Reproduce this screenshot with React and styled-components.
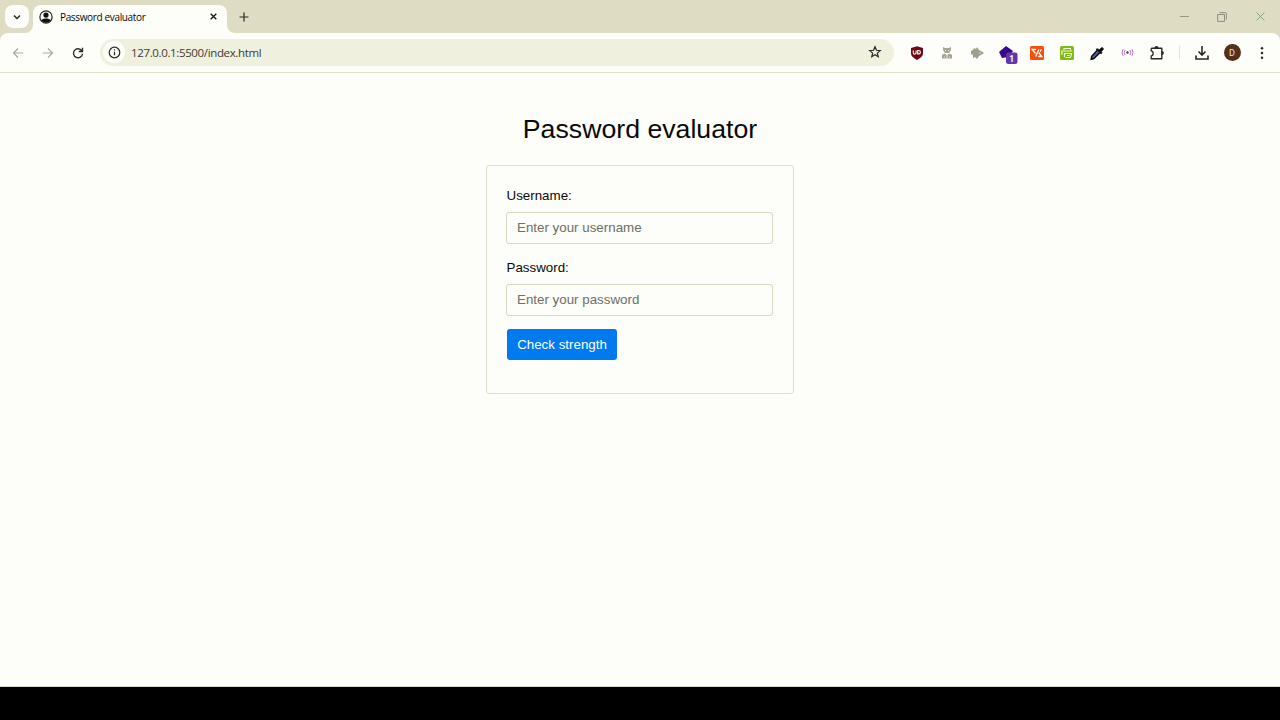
import React from "react";
import styled, { createGlobalStyle } from "styled-components";

const Global = createGlobalStyle`
  * { box-sizing: border-box; }
  body { margin: 0; background: #fdfdf9; overflow: hidden; }
`;
const Screen = styled.div`
  width: 1280px; height: 720px; display: flex; flex-direction: column;
  background: #fdfdf9; color: #090909; font-family: "Liberation Sans", Arial, sans-serif;
`;
const TabStrip = styled.header`
  height: 33px; flex: none; display: flex; align-items: flex-start;
  background: #dedcc3; padding: 5px 0 0 5px;
`;
const TabSearch = styled.button`
  width: 24px; height: 23px; border: 0; border-radius: 8px; padding: 0;
  background: #fdfdf9; display: grid; place-items: center;
`;
const Tab = styled.div`
  width: 194px; height: 28px; background: #fdfdf9; border-radius: 8px 8px 0 0;
  display: flex; align-items: center; padding: 0 9px 5px 6px;
  font: 10px "Open Sans", "Noto Sans", sans-serif; letter-spacing: -0.35px;
`;
const TabTitle = styled.span`flex: 1; padding-left: 7px; white-space: nowrap;`;
const NewTab = styled.span`width: 18px; height: 23px; display: grid; place-items: center;`;
const WindowControls = styled.div`
  margin-left: auto; width: 113px; height: 23px; display: flex; align-items: center;
  justify-content: space-around; margin-right: 1px;
`;
const Curve = styled.svg`
  width: 8px; height: 8px; align-self: flex-end; margin-left: ${p => p.$left ? "-4px" : 0};
`;
const ToolbarBacking = styled.div`background: #dedcc3; flex: none;`;
const Toolbar = styled.nav`
  height: 40px; display: flex; align-items: center; border-bottom: 1px solid #e2e2c6;
  background: #fdfdf9; padding: 0 3px 1px; border-radius: 8px 8px 0 0;
`;
const Tool = styled.span`
  width: 30px; height: 24px; padding-top: 1px; flex: none; display: grid; place-items: center;
`;
const Address = styled.div`
  width: 794px; height: 27px; margin: 0 8px 0 7px; border-radius: 14px; flex: none;
  background: #eff0dd; display: flex; align-items: center; padding: 0 12px 0 3px;
`;
const Info = styled.span`
  width: 22px; height: 22px; border-radius: 50%; background: #fdfdf9;
  display: grid; place-items: center; margin-right: 6px;
`;
const Url = styled.span`
  flex: 1; padding-top: 1px; font: 11.5px "Open Sans", "Noto Sans", sans-serif;
  letter-spacing: -0.36px; color: #3c3c34;
`;
const Divider = styled.i`width: 1px; height: 13px; background: #dce2e9; margin: 0 7px;`;
const Avatar = styled.span`
  width: 17px; height: 17px; border-radius: 50%; background: #54301b; color: #eee3dc;
  display: grid; place-items: center; font: 9px Roboto, sans-serif;
`;
const Page = styled.main`
  flex: 1; display: flex; flex-direction: column; align-items: center;
  padding-top: 40px; border-bottom: 1px solid #d8d8c0;
`;
const Title = styled.h1`margin: 0 0 20px; font-size: 26.7px; line-height: 32px; font-weight: 400;`;
const Form = styled.form`
  width: 308px; height: 229px; border: 1px solid #dfdfca; border-radius: 3px; padding: 20px 20px 0 19px;
`;
const Field = styled.label`display: block; height: 72px; font-size: 13.35px; line-height: 20px;`;
const LabelText = styled.span`display: block; padding-left: 0.5px;`;
const Input = styled.input`
  display: block; width: 267px; height: 32px; margin-top: 6px; border: 1px solid #d7d8bd;
  border-radius: 3px; padding: 0 10px 2px; background: #fdfdf9; font: 13.35px "Liberation Sans", sans-serif;
  &::placeholder { color: #6c7066; opacity: 1; }
`;
const Submit = styled.button`
  display: block; width: 110px; height: 31px; border: 0; border-radius: 3px; background: #007bef;
  margin: -1px 0 0 1px; padding: 0; color: #fdfdf9; font: 13.35px "Liberation Sans", sans-serif;
`;
const Footer = styled.footer`height: 33px; flex: none; background: #000;`;

const Glyph = ({ size = 16, color = "#292924", width = 1.5, children, ...rest }) => (
  <svg width={size} height={size} viewBox="0 0 16 16" fill="none" stroke={color} strokeWidth={width} {...rest}>{children}</svg>
);

function Extensions() {
  return <>
    <Tool><Glyph stroke="none">
      <path d="M8 1.3l6 1.8v5c0 3.2-2.6 5.3-6 6.8-3.4-1.5-6-3.6-6-6.8v-5z" fill="#710713" />
      <path d="M4.3 5.5v2.2a1.4 1.4 0 002.8 0V5.5m1.6 0v3.4h1a1.7 1.7 0 000-3.4z" stroke="#fff" strokeWidth="1.1" />
    </Glyph></Tool>
    <Tool><Glyph stroke="none"><g fill="#a4a48f">
      <path d="M4 2l2 1h4l2-1v3l-2 3H6L4 5z" />
      <path d="M5.5 8.5L8 10v3.5H3V10zM10.5 8.5L8 10v3.5h5V10z" />
    </g><path d="M6 5l1 1m3-1L9 6M8 9.5V14M5 12h1m4 0h1" stroke="#fdfdf9" strokeWidth=".8" /></Glyph></Tool>
    <Tool><Glyph stroke="none">
      <path d="M2 6l2-1 1-2 2 1 1-2 2 3 2 1 3 2-3 2-2 1-2 3-2-2-2 1v-3l-2-1z" fill="#a09f8d" />
      <circle cx="11" cy="8" r=".7" fill="#ededdf" />
    </Glyph></Tool>
    <Tool><svg width="24" height="22" viewBox="0 0 24 22">
      <path d="M4 10l7-6 7 5-5 6-6 1z" fill="#39088d" />
      <rect x="11" y="10.5" width="11.5" height="11.5" rx="2.3" fill="#6137aa" />
      <text x="16.8" y="19.5" textAnchor="middle" fill="#fff" fontSize="8.5" fontWeight="700" fontFamily="Roboto">1</text>
    </svg></Tool>
    <Tool><Glyph stroke="none">
      <rect x="1" y="1" width="14" height="14" rx="1.5" fill="#f94d0b" />
      <path d="M7.2 4.5H3.3l3.2 4m3.3-4L6.7 11.5m3-4l3 4H9.2m3.2-7l-1.3 2" stroke="#fff" strokeWidth="1.35" />
    </Glyph></Tool>
    <Tool><Glyph stroke="none">
      <rect x="1" y="1" width="14" height="14" rx="1.5" fill="#82b915" />
      <path d="M5 5V3.5h6.5V5M4 9H2.8V6h10.4M5.5 12V8.5h7.2l-1.4 4H6.5M8 10.5h2.5" stroke="#eef5d6" strokeWidth="1.1" />
    </Glyph></Tool>
    <Tool><Glyph>
      <path d="M8.5 5l2.5 2.5-6.2 6-2.6.8.5-3z" fill="#5961ad" stroke="#090909" strokeWidth="1.5" />
      <path d="M7 4l5 5 1.2-1.2-1-1 2-2c1-1-.9-3-2-2l-2 2-1-1z" fill="#090909" strokeWidth=".7" />
    </Glyph></Tool>
    <Tool><Glyph size={13} color="#bd69bd" width={1.2}>
      <circle cx="8" cy="8" r="1.1" fill="#75366c" stroke="#75366c" />
      <path d="M5 5q-2 3 0 6m6-6q2 3 0 6M2.5 4q-2.5 4 0 8m11-8q2.5 4 0 8" />
    </Glyph></Tool>
    <Tool><Glyph width={1.35}>
      <path d="M2.2 3.2h10.6v3.5M12.8 9.3v4.4H2.2v-2.8c2.6-.3 2.6-4.7 0-5V3.2" strokeLinejoin="round" />
      <path d="M6 3.2a1.5 1.5 0 013 0zM12.8 6.7a1.4 1.4 0 010 2.8z" fill="#292924" />
    </Glyph></Tool>
  </>;
}

export default function App() {
  return <><Global /><Screen>
    <TabStrip>
      <TabSearch aria-label="Search tabs"><Glyph size={12} width={2}><path d="M4 6l4 4 4-4" /></Glyph></TabSearch>
      <Curve $left viewBox="0 0 8 8"><path d="M8 0v8H0a8 8 0 008-8" fill="#fdfdf9" /></Curve>
      <Tab>
        <Glyph size={14} width={1.4}><circle cx="8" cy="8" r="7" /><circle cx="8" cy="5.8" r="3" fill="#111" stroke="none" /><path d="M2.5 12c2-3 9-3 11 0q-5 5-11 0" fill="#111" stroke="none" /></Glyph>
        <TabTitle>Password evaluator</TabTitle>
        <Glyph size={9} color="#111" width={2.3}><path d="M3 3l10 10M13 3L3 13" /></Glyph>
      </Tab>
      <Curve viewBox="0 0 8 8"><path d="M0 0v8h8a8 8 0 01-8-8" fill="#fdfdf9" /></Curve>
      <NewTab><Glyph size={12} width={1.6}><path d="M8 2v12M2 8h12" /></Glyph></NewTab>
      <WindowControls>
        <Glyph size={9} color="#88887b" width={1.5}><path d="M0 8h16" /></Glyph>
        <Glyph size={10} color="#88887b" width={1.5}><path d="M1 4h11v11H1zm3-3h10a1 1 0 011 1v10" /></Glyph>
        <Glyph size={9} color="#7c9380" width={1.5}><path d="M1 1l14 14M15 1L1 15" /></Glyph>
      </WindowControls>
    </TabStrip>
    <ToolbarBacking><Toolbar>
      <Tool><Glyph size={12} color="#aaa997"><path d="M8 2L2 8l6 6M2 8h13" /></Glyph></Tool>
      <Tool><Glyph size={12} color="#aaa997"><path d="M8 2l6 6-6 6m6-6H1" /></Glyph></Tool>
      <Tool><Glyph size={12} width={1.8}><path d="M13 5A6 6 0 1014 9M14 1v5H9" /></Glyph></Tool>
      <Address>
        <Info><Glyph size={13} width={1.5}><circle cx="8" cy="8" r="6.5" /><path d="M8 7v4.5M8 4v1.5" /></Glyph></Info>
        <Url>127.0.0.1:5500/index.html</Url>
        <Glyph size={14} width={1.4}><path d="M8 2l1.7 4 4.3.4-3.3 2.9 1 4.2L8 11.2l-3.7 2.3 1-4.2L2 6.4 6.3 6z" /></Glyph>
      </Address>
      <Extensions /><Divider />
      <Tool><Glyph width={1.6}><path d="M8 1v9M4.5 6.5L8 10l3.5-3.5M2 10.5V14h12v-3.5" /></Glyph></Tool>
      <Tool><Avatar>D</Avatar></Tool>
      <Tool><Glyph stroke="none"><g fill="#292924"><circle cx="8" cy="3.3" r="1.25" /><circle cx="8" cy="8" r="1.25" /><circle cx="8" cy="12.7" r="1.25" /></g></Glyph></Tool>
    </Toolbar></ToolbarBacking>
    <Page>
      <Title>Password evaluator</Title>
      <Form>
        <Field><LabelText>Username:</LabelText><Input type="text" placeholder="Enter your username" /></Field>
        <Field><LabelText>Password:</LabelText><Input type="password" placeholder="Enter your password" /></Field>
        <Submit type="button">Check strength</Submit>
      </Form>
    </Page>
    <Footer />
  </Screen></>;
}
